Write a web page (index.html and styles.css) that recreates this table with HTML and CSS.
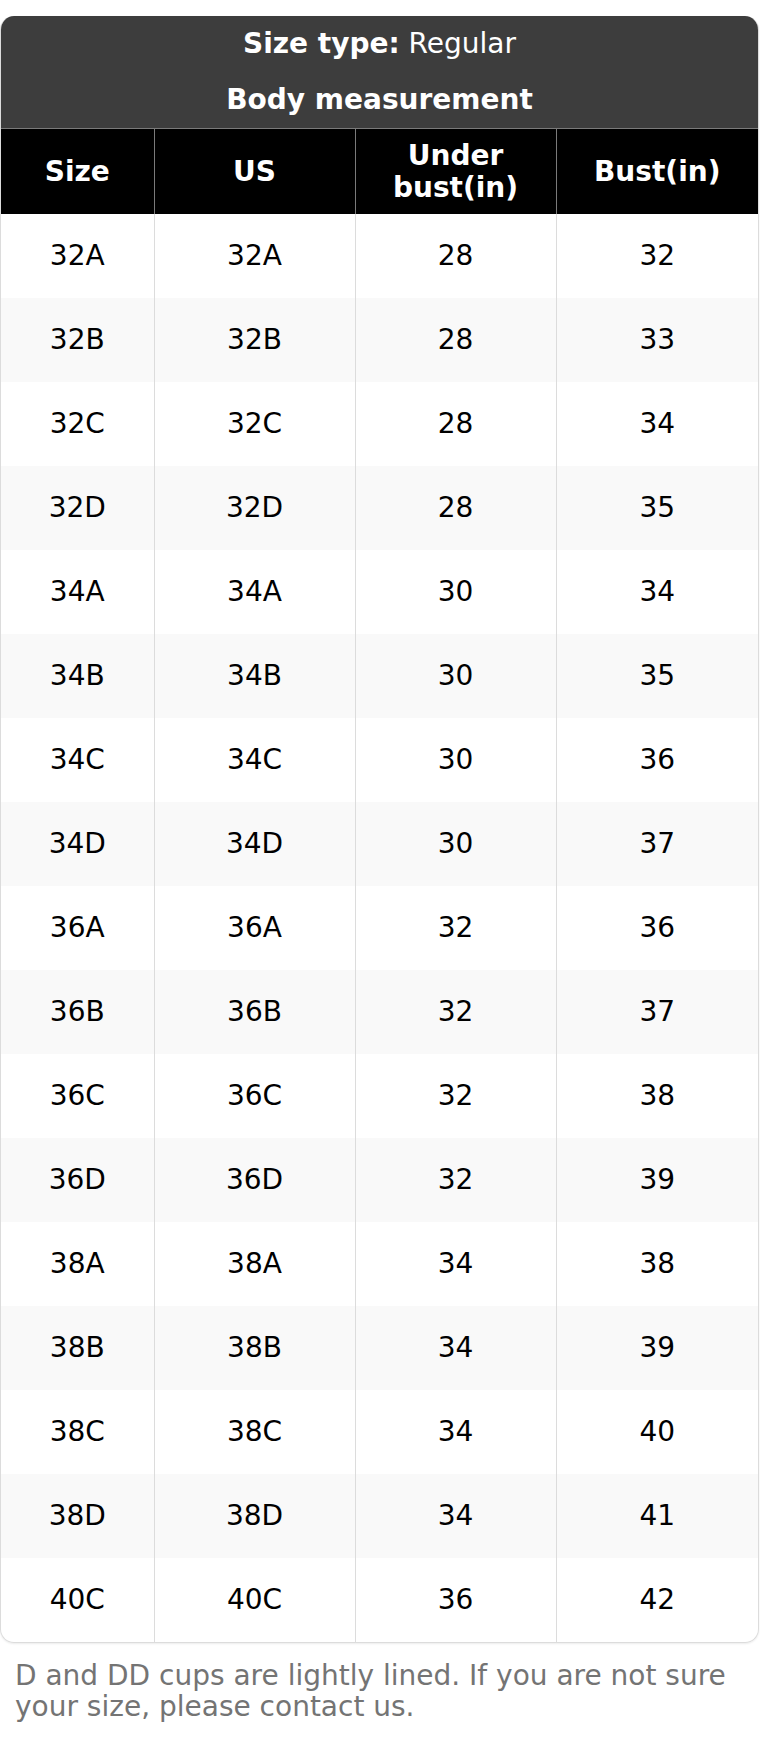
FILE: index.html
```html
<!DOCTYPE html>
<html>
<head>
<meta charset="utf-8">
<link rel="stylesheet" href="styles.css">
</head>
<body>
<div class="page">
  <div class="card">
    <div class="title">
      <div class="title-line"><b>Size type:</b> Regular</div>
      <div class="title-line"><b>Body measurement</b></div>
    </div>
    <table class="chart">
      <colgroup>
        <col class="c1"><col class="c2"><col class="c3"><col class="c4">
      </colgroup>
      <thead>
        <tr><th>Size</th><th>US</th><th>Under bust(in)</th><th>Bust(in)</th></tr>
      </thead>
      <tbody>
        <tr><td>32A</td><td>32A</td><td>28</td><td>32</td></tr>
        <tr><td>32B</td><td>32B</td><td>28</td><td>33</td></tr>
        <tr><td>32C</td><td>32C</td><td>28</td><td>34</td></tr>
        <tr><td>32D</td><td>32D</td><td>28</td><td>35</td></tr>
        <tr><td>34A</td><td>34A</td><td>30</td><td>34</td></tr>
        <tr><td>34B</td><td>34B</td><td>30</td><td>35</td></tr>
        <tr><td>34C</td><td>34C</td><td>30</td><td>36</td></tr>
        <tr><td>34D</td><td>34D</td><td>30</td><td>37</td></tr>
        <tr><td>36A</td><td>36A</td><td>32</td><td>36</td></tr>
        <tr><td>36B</td><td>36B</td><td>32</td><td>37</td></tr>
        <tr><td>36C</td><td>36C</td><td>32</td><td>38</td></tr>
        <tr><td>36D</td><td>36D</td><td>32</td><td>39</td></tr>
        <tr><td>38A</td><td>38A</td><td>34</td><td>38</td></tr>
        <tr><td>38B</td><td>38B</td><td>34</td><td>39</td></tr>
        <tr><td>38C</td><td>38C</td><td>34</td><td>40</td></tr>
        <tr><td>38D</td><td>38D</td><td>34</td><td>41</td></tr>
        <tr><td>40C</td><td>40C</td><td>36</td><td>42</td></tr>
      </tbody>
    </table>
  </div>
  <p class="note">D and DD cups are lightly lined. If you are not sure your size, please contact us.</p>
</div>
</body>
</html>
```

FILE: styles.css
```css
html, body {
  margin: 0;
  padding: 0;
  background: #fff;
}
body {
  font-family: "DejaVu Sans", sans-serif;
  font-size: 28px;
  line-height: 1.1;
  color: #000;
}
.page {
  padding-top: 16px;
}
.card {
  width: 757px;
  margin-left: 0;
  border: 1px solid #dcdcdc;
  border-top: none;
  border-radius: 14px;
  overflow: hidden;
  box-shadow: 0 1px 2px rgba(0,0,0,0.08);
}
.title {
  background: #3d3d3d;
  color: #fff;
  text-align: center;
  border-bottom: 1px solid #7a7a7a;
}
.title-line {
  padding: 12px 0;
  line-height: 32px;
  height: 32px;
}
.title-line b {
  font-weight: bold;
}
.chart {
  width: 100%;
  border-collapse: collapse;
  table-layout: fixed;
}
.c1 { width: 153px; }
.c2 { width: 201px; }
.c3 { width: 201px; }
.c4 { width: 202px; }
.chart th {
  background: #000;
  color: #fff;
  font-weight: bold;
  height: 85px;
  padding: 0 12px;
  box-sizing: border-box;
  border-left: 1px solid #7a7a7a;
  text-align: center;
  vertical-align: middle;
  line-height: 32px;
}
.chart th:first-child,
.chart td:first-child {
  border-left: none;
}
.chart td {
  height: 84px;
  padding: 0;
  box-sizing: border-box;
  text-align: center;
  vertical-align: middle;
  border-left: 1px solid #dcdcdc;
}
.chart tbody tr:nth-child(even) td {
  background: #f9f9f9;
}
.note {
  margin: 0;
  padding: 17px 15px 0;
  color: #747474;
  font-size: 28px;
  line-height: 31px;
}
```
